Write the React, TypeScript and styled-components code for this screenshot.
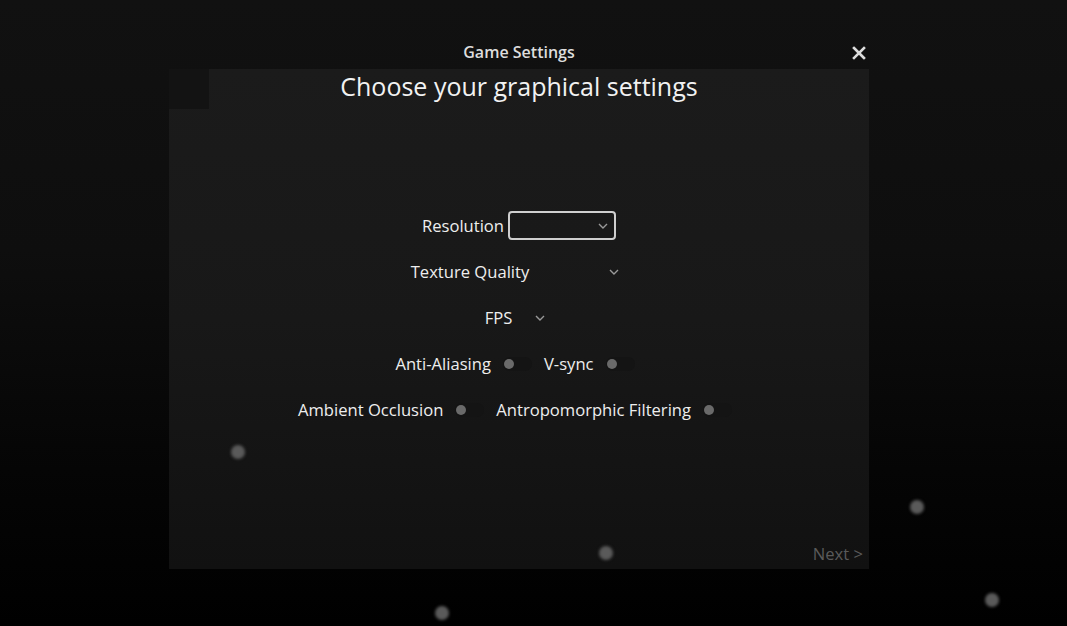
import React, { useState } from 'react';
import styled, { createGlobalStyle } from 'styled-components';

const GlobalStyle = createGlobalStyle`
  html, body {
    margin: 0;
    padding: 0;
    height: 100%;
  }
  body {
    font-family: 'Open Sans', 'Noto Sans', sans-serif;
    background: linear-gradient(to bottom, #111111 0%, #0e0e0e 40%, #050505 75%, #000000 100%);
    color: #eeeeee;
    overflow: hidden;
  }
`;

type Particle = { x: number; y: number };
const particles: Particle[] = [
  { x: 238, y: 452 },
  { x: 606, y: 553 },
  { x: 917, y: 507 },
  { x: 992, y: 600 },
  { x: 442, y: 613 },
];

const App: React.FC = () => {
  const [toggles, setToggles] = useState<Record<string, boolean>>({});
  const flip = (key: string) => setToggles(t => ({ ...t, [key]: !t[key] }));

  const renderToggle = (label: string) => (
    <ToggleGroup key={label}>
      <Label>{label}</Label>
      <Track onClick={() => flip(label)}>
        <Knob $on={!!toggles[label]} />
      </Track>
    </ToggleGroup>
  );

  return (
    <>
      <GlobalStyle />
      <Page>
        <Modal>
          <Header>
            <Title>Game Settings</Title>
            <Close aria-label="close">
              <svg width="14" height="14" viewBox="0 0 14 14">
                <path d="M2 2 L12 12 M12 2 L2 12" stroke="#dddddd" strokeWidth="2.6" strokeLinecap="square" />
              </svg>
            </Close>
          </Header>
          <Panel>
            <BackSlot />
            <Heading>Choose your graphical settings</Heading>
            <Form>
              <Row>
                <Label>Resolution</Label>
                <Select $width={108} $bordered>
                  <Chevron />
                </Select>
              </Row>
              <Row>
                <Label>Texture Quality</Label>
                <Select $width={94}>
                  <Chevron />
                </Select>
              </Row>
              <Row>
                <Label>FPS</Label>
                <Select $width={37}>
                  <Chevron />
                </Select>
              </Row>
              <Row $gap={12} $trail={8}>
                {renderToggle('Anti-Aliasing')}
                {renderToggle('V-sync')}
              </Row>
              <Row $gap={12} $trail={8}>
                {renderToggle('Ambient Occlusion')}
                {renderToggle('Antropomorphic Filtering')}
              </Row>
            </Form>
            <Footer>
              <NextButton>Next &gt;</NextButton>
            </Footer>
          </Panel>
        </Modal>
        {particles.map((p, i) => (
          <Dot key={i} style={{ left: p.x - 7, top: p.y - 7 }} />
        ))}
      </Page>
    </>
  );
};

const Chevron: React.FC = () => (
  <ChevronIcon width="10" height="6" viewBox="0 0 10 6">
    <path d="M1 1 L5 5 L9 1" fill="none" stroke="#999999" strokeWidth="1.4" />
  </ChevronIcon>
);

export default App;

const Page = styled.div`
  position: relative;
  width: 1067px;
  height: 626px;
  padding-left: 169px;
  box-sizing: border-box;
`;

const Modal = styled.div`
  width: 700px;
  padding-top: 40px;
`;

const Header = styled.div`
  position: relative;
  height: 29px;
  display: flex;
  justify-content: center;
  align-items: flex-start;
`;

const Title = styled.div`
  font-size: 16px;
  font-weight: 600;
  color: #dddddd;
  line-height: 24px;
`;

const Close = styled.button`
  position: absolute;
  right: 3px;
  top: 6px;
  background: none;
  border: none;
  padding: 0;
  width: 14px;
  height: 14px;
  cursor: pointer;
  display: flex;
`;

const Panel = styled.div`
  position: relative;
  height: 500px;
  background: linear-gradient(to bottom, #1b1b1b 0%, #181818 50%, #111111 100%);
  display: flex;
  flex-direction: column;
`;

const BackSlot = styled.div`
  position: absolute;
  left: 0;
  top: 0;
  width: 40px;
  height: 40px;
  background: #131313;
`;

const Heading = styled.h1`
  margin: 0;
  padding-top: 1px;
  text-align: center;
  font-size: 25px;
  font-weight: 500;
  line-height: 33px;
  color: #f2f2f2;
`;

const Form = styled.div`
  margin-top: 108px;
  display: flex;
  flex-direction: column;
  gap: 17px;
`;

const Row = styled.div<{ $gap?: number; $trail?: number }>`
  display: flex;
  justify-content: center;
  align-items: center;
  height: 29px;
  gap: ${p => p.$gap ?? 4}px;
  padding-right: ${p => p.$trail ?? 0}px;
`;

const Label = styled.span`
  font-size: 16.6px;
  color: #eeeeee;
  line-height: 22px;
`;

const Select = styled.div<{ $width: number; $bordered?: boolean }>`
  width: ${p => p.$width}px;
  height: 29px;
  box-sizing: border-box;
  border: 2px solid ${p => (p.$bordered ? '#cfcfcf' : 'transparent')};
  border-radius: 4px;
  display: flex;
  align-items: center;
  justify-content: flex-end;
  padding-right: 6px;
`;

const ChevronIcon = styled.svg`
  display: block;
`;

const ToggleGroup = styled.div`
  display: flex;
  align-items: center;
  gap: 12px;
`;

const Track = styled.div`
  width: 29px;
  height: 14px;
  border-radius: 7px;
  background: #141414;
  position: relative;
  cursor: pointer;
`;

const Knob = styled.div<{ $on: boolean }>`
  position: absolute;
  top: 2px;
  left: ${p => (p.$on ? 17 : 1)}px;
  width: 10px;
  height: 10px;
  border-radius: 50%;
  background: ${p => (p.$on ? '#bbbbbb' : '#6a6a6a')};
`;

const Footer = styled.div`
  margin-top: auto;
  display: flex;
  justify-content: flex-end;
  padding: 0 6px 3px 0;
`;

const NextButton = styled.button`
  background: none;
  border: none;
  padding: 0;
  font-family: 'Open Sans', 'Noto Sans', sans-serif;
  font-size: 16.6px;
  line-height: 24px;
  color: #5a5a5a;
  cursor: pointer;
`;

const Dot = styled.div`
  position: absolute;
  width: 14px;
  height: 14px;
  border-radius: 50%;
  background: #5a5a5a;
  filter: blur(1.5px);
  pointer-events: none;
`;
